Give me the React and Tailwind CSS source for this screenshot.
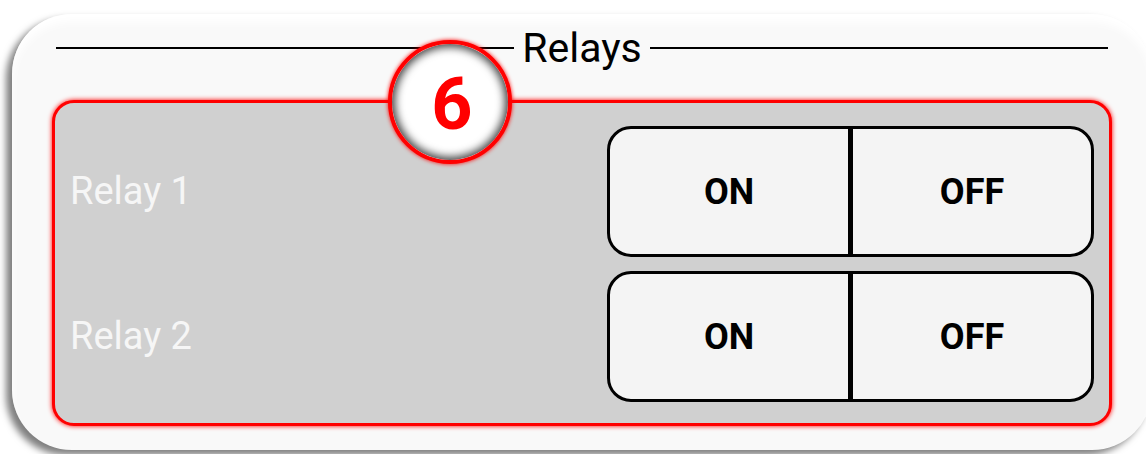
const relays = ['Relay 1', 'Relay 2'];

function Toggle() {
  return (
    <div className="w-[487px] h-full flex rounded-[24px] border-[3px] border-black bg-[#f4f4f4] overflow-hidden">
      <button className="flex-1 flex items-center justify-center text-[36px] font-bold text-black">ON</button>
      <div className="w-[5px] bg-black" />
      <button className="flex-1 flex items-center justify-center text-[36px] font-bold text-black">OFF</button>
    </div>
  );
}

export default function App() {
  return (
    <div className="w-[1146px] h-[454px] overflow-hidden bg-white font-['Roboto',sans-serif]">
      <div className="ml-[12px] mt-[14px] w-[1140px] h-[436px] rounded-[60px] bg-[#f9f9f9] shadow-[-6px_5px_7px_rgba(0,0,0,0.5),inset_0_8px_10px_rgba(255,255,255,1)] pt-[14px] px-[40px]">
        {/* Title */}
        <div className="mx-[4px] h-[40px] flex items-center">
          <div className="flex-1 h-[2px] bg-black" />
          <span className="px-[8px] text-[41px] leading-none text-black">Relays</span>
          <div className="flex-1 h-[2px] bg-black" />
        </div>

        {/* Panel */}
        <div className="relative mt-[32px] h-[326px] rounded-[22px] border-[3px] border-[#ff0000] bg-[#d0d0d0] shadow-[0_0_5px_#ff0000] pl-[15px] pr-[15px] pt-[23px] pb-[21px] flex flex-col gap-[14px]">
          {relays.map((name) => (
            <div key={name} className="h-[131px] flex items-center justify-between">
              <span className="text-[38px] text-[#f6f6f6]">{name}</span>
              <Toggle />
            </div>
          ))}

          <div className="absolute left-[333px] top-[-63px] w-[124px] h-[124px] rounded-full border-[4px] border-[#ff0000] bg-white shadow-[0_0_4px_#ff0000,inset_0_0_9px_3px_rgba(0,0,0,0.75)] flex items-center justify-center">
            <span className="text-[72px] font-bold leading-none text-[#ff0000] mt-[6px] ml-[4px]">6</span>
          </div>
        </div>
      </div>
    </div>
  );
}
